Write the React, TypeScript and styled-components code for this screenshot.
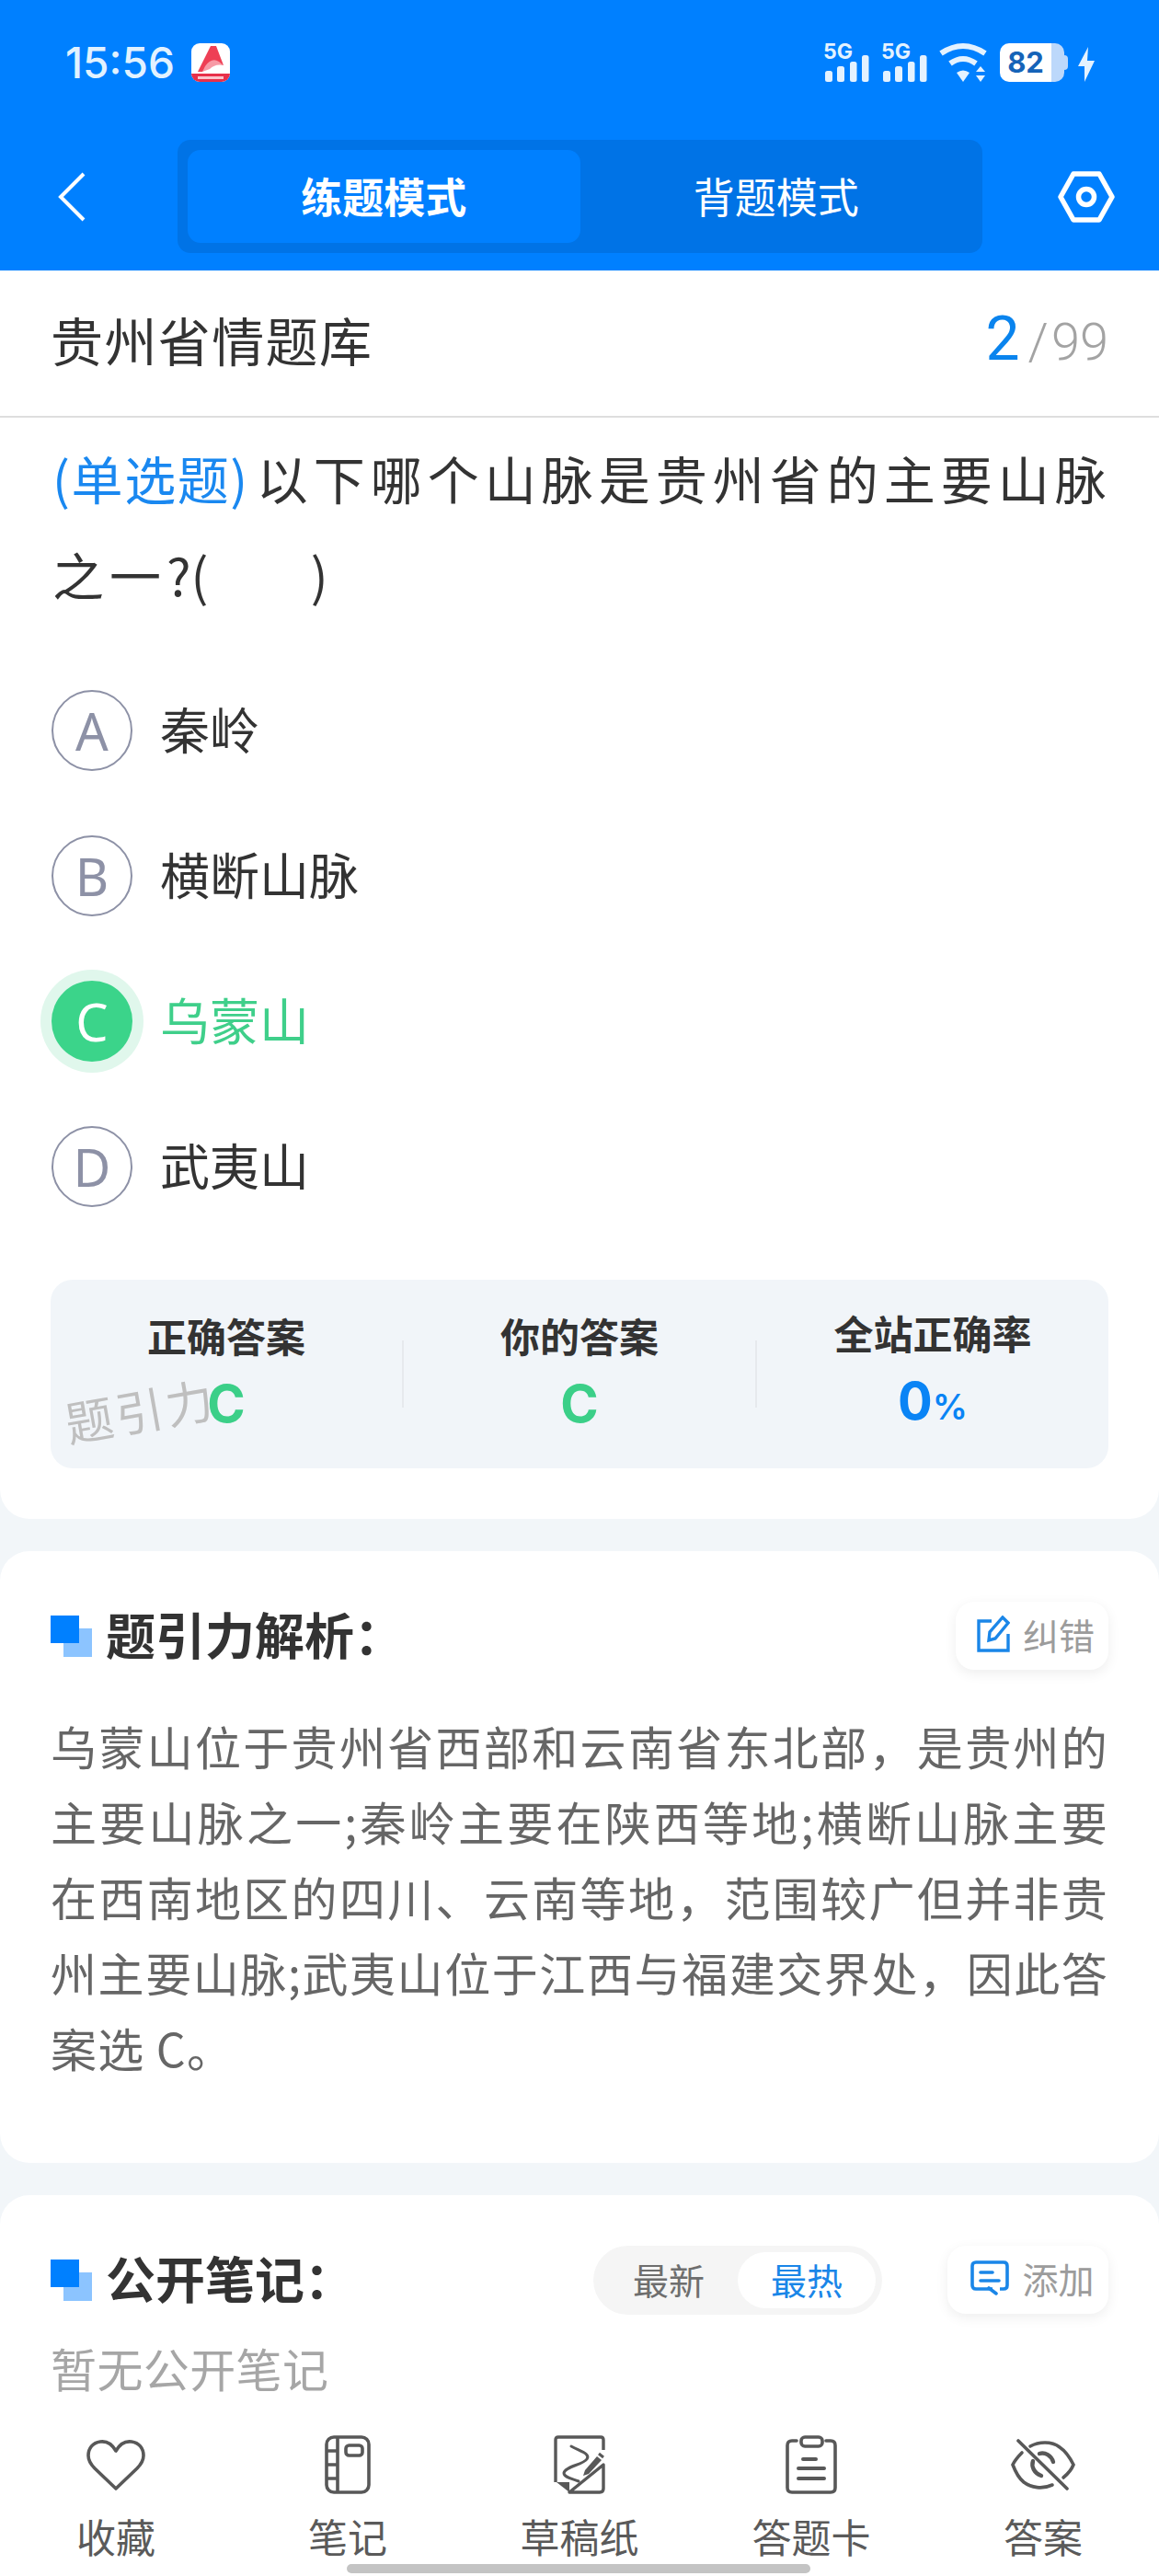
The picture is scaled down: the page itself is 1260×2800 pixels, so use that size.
import React from "react";
import styled, { createGlobalStyle } from "styled-components";

const CJK = `"Noto Sans CJK SC", "Noto Sans", sans-serif`;
const LATIN = `Inter, "Noto Sans CJK SC", sans-serif`;

const GlobalStyle = createGlobalStyle`
  html, body {
    margin: 0;
    padding: 0;
    background: #f2f6f9;
  }
  * {
    box-sizing: border-box;
  }
`;

const Screen = styled.div`
  position: relative;
  display: flex;
  flex-direction: column;
  width: 1260px;
  height: 2800px;
  overflow: hidden;
  background: #f2f6f9;
  font-family: ${CJK};
`;

const Header = styled.header`
  flex-shrink: 0;
  height: 294px;
  background: #0080ff;
`;

const StatusBar = styled.div`
  display: flex;
  align-items: flex-start;
  justify-content: space-between;
  height: 152px;
  padding: 46px 70px 0 71px;
`;

const StatusLeft = styled.div`
  display: flex;
  align-items: center;
  gap: 18px;
  height: 44px;
`;

const Time = styled.span`
  font-family: ${LATIN};
  font-size: 46px;
  font-weight: 500;
  line-height: 44px;
  color: #e2f2ff;
`;

const StatusRight = styled.div`
  display: flex;
  align-items: flex-start;
`;

const Battery = styled.div`
  position: relative;
  width: 70px;
  height: 42px;
  margin: 1px 15px 0 12px;
  padding-right: 14px;
  border-radius: 10px;
  background: linear-gradient(90deg, #ffffff 0 56px, #bcd8fb 56px);
  font-family: ${LATIN};
  font-size: 31px;
  font-weight: 700;
  line-height: 42px;
  text-align: center;
  color: #1563b8;

  &::after {
    content: "";
    position: absolute;
    top: 13px;
    right: -4px;
    width: 4px;
    height: 16px;
    border-radius: 0 4px 4px 0;
    background: #bcd8fb;
  }
`;

const NavRow = styled.div`
  display: flex;
  align-items: center;
  height: 123px;
`;

const BackSlot = styled.div`
  display: flex;
  justify-content: flex-start;
  width: 193px;
  padding-left: 62px;
`;

const ModeTabs = styled.div`
  display: flex;
  width: 875px;
  height: 123px;
  padding: 11px;
  border-radius: 14px;
  background: #0073e6;
`;

const ModeTab = styled.div<{ $active?: boolean }>`
  display: flex;
  align-items: center;
  justify-content: center;
  width: 427px;
  padding-bottom: 3px;
  border-radius: 14px;
  background: ${(p) => (p.$active ? "#0080ff" : "transparent")};
  font-size: 45px;
  font-weight: ${(p) => (p.$active ? 700 : 400)};
  color: #ffffff;
`;

const SettingSlot = styled.div`
  display: flex;
  justify-content: flex-end;
  flex: 1;
  padding-right: 48px;
`;

const Body = styled.main`
  flex: 1;
  min-height: 0;
  overflow: hidden;
`;

const QuestionCard = styled.section`
  padding-bottom: 55px;
  border-radius: 0 0 32px 32px;
  background: #ffffff;
`;

const TitleRow = styled.div`
  display: flex;
  align-items: center;
  justify-content: space-between;
  height: 160px;
  padding: 0 55px 10px;
  border-bottom: 2px solid #dedede;
`;

const BankTitle = styled.h1`
  margin: 0;
  font-size: 57px;
  font-weight: 400;
  letter-spacing: 1.4px;
  color: #333333;
`;

const Counter = styled.div`
  display: flex;
  align-items: baseline;
  font-family: Roboto, sans-serif;
  font-weight: 300;
  color: #a3a3a3;
`;

const CounterNow = styled.span`
  font-size: 66px;
  font-weight: 400;
  color: #0a84ee;
`;

const CounterSlash = styled.span`
  margin: 0 3px 0 9px;
  font-size: 56px;
`;

const CounterTotal = styled.span`
  font-size: 56px;
`;

const QuestionText = styled.p`
  margin: 0;
  padding: 12px 40px 0 57px;
  font-size: 56px;
  line-height: 105px;
  letter-spacing: 6px;
  color: #333333;
  white-space: pre-wrap;
`;

const QuestionType = styled.span`
  margin-right: 8px;
  letter-spacing: 1.6px;
  color: #1a88f0;
`;

const QuestionMark = styled.span`
  letter-spacing: 0;
`;

const Options = styled.ul`
  list-style: none;
  margin: 39px 0 44px;
  padding: 0 0 0 56px;
`;

const Option = styled.li`
  display: flex;
  align-items: center;
  gap: 30px;
  height: 158px;
`;

const OptionMark = styled.span<{ $correct?: boolean }>`
  display: flex;
  align-items: center;
  justify-content: center;
  width: 88px;
  height: 88px;
  border-radius: 50%;
  border: ${(p) => (p.$correct ? "none" : "2px solid #8d91a6")};
  background: ${(p) => (p.$correct ? "#3bd48a" : "#ffffff")};
  box-shadow: ${(p) => (p.$correct ? "0 0 0 12px #e0f7ec" : "none")};
  font-family: "Noto Sans", sans-serif;
  font-size: 56px;
  font-weight: 400;
  color: ${(p) => (p.$correct ? "#ffffff" : "#8d91a6")};
`;

const OptionText = styled.span<{ $correct?: boolean }>`
  padding-bottom: 6px;
  font-size: 54px;
  color: ${(p) => (p.$correct ? "#3fcf8a" : "#333333")};
`;

const StatsPanel = styled.div`
  position: relative;
  display: grid;
  grid-template-columns: 1fr 2px 1fr 2px 1fr;
  align-items: center;
  height: 205px;
  margin: 0 55px;
  border-radius: 24px;
  background: #f1f5f9;
`;

const StatColumn = styled.div`
  display: flex;
  flex-direction: column;
  align-items: center;
  padding-bottom: 10px;
`;

const StatLabel = styled.span`
  font-size: 43px;
  font-weight: 700;
  line-height: 62px;
  color: #333333;
`;

const StatValue = styled.span<{ $blue?: boolean }>`
  margin-top: 12px;
  font-family: ${LATIN};
  font-size: 56px;
  font-weight: 700;
  line-height: 64px;
  color: ${(p) => (p.$blue ? "#0a84f5" : "#3bcf88")};
`;

const StatUnit = styled.span`
  font-size: 38px;
  font-weight: 600;
`;

const StatDivider = styled.div`
  height: 73px;
  background: #e6e9ed;
`;

const Watermark = styled.span`
  position: absolute;
  left: 15px;
  top: 111px;
  font-size: 52px;
  font-weight: 400;
  letter-spacing: 3px;
  line-height: 60px;
  color: #bfbfbf;
  transform: rotate(-10deg);
`;

const Card = styled.section`
  margin-top: 35px;
  padding: 55px 55px 85px;
  border-radius: 32px;
  background: #ffffff;
`;

const CardHead = styled.div`
  display: flex;
  align-items: center;
  height: 74px;
`;

const HeadMark = styled.span`
  position: relative;
  flex-shrink: 0;
  width: 45px;
  height: 45px;
  margin: 0 15px 0 0;
  background: linear-gradient(#8cc4ff, #8cc4ff) no-repeat right bottom / 31px 31px;

  &::before {
    content: "";
    position: absolute;
    left: 0;
    top: 0;
    width: 31px;
    height: 30px;
    background: #0080ff;
  }
`;

const CardTitle = styled.h2`
  flex: 1;
  margin: 0;
  padding-bottom: 6px;
  font-size: 54px;
  font-weight: 700;
  color: #333333;
`;

const ActionButton = styled.div<{ $gap: number; $width: number; $shift: number }>`
  display: flex;
  align-items: center;
  justify-content: center;
  gap: ${(p) => p.$gap}px;
  width: ${(p) => p.$width}px;
  height: 74px;
  padding: 0 0 5px ${(p) => p.$shift}px;
  border-radius: 20px;
  background: #ffffff;
  box-shadow: 0 4px 14px rgba(0, 0, 0, 0.07);
  font-size: 39px;
  color: #9c9c9c;
`;

const Explanation = styled.p`
  margin: 41px 0 0;
  font-size: 50px;
  line-height: 82px;
  letter-spacing: 1.2px;
  text-align: justify;
  color: #666666;
`;

const SortSwitch = styled.div`
  display: flex;
  align-items: center;
  width: 314px;
  height: 75px;
  margin-right: 71px;
  padding: 0 7px 0 7px;
  border-radius: 38px;
  background: #f5f5f5;
`;

const SortItem = styled.span<{ $active?: boolean }>`
  display: flex;
  align-items: center;
  justify-content: center;
  flex: ${(p) => (p.$active ? "0 0 150px" : "1")};
  height: 61px;
  padding-bottom: 3px;
  border-radius: 31px;
  background: ${(p) => (p.$active ? "#ffffff" : "transparent")};
  font-size: 39px;
  color: ${(p) => (p.$active ? "#1a86e8" : "#6e6e6e")};
`;

const EmptyNote = styled.div`
  margin-top: 23px;
  font-size: 50px;
  line-height: 70px;
  letter-spacing: 0.4px;
  color: #a6a6a6;
`;

const TabBar = styled.nav`
  flex-shrink: 0;
  display: grid;
  grid-template-columns: repeat(5, 1fr);
  height: 180px;
  padding-top: 27px;
  background: #ffffff;
`;

const TabItem = styled.div`
  display: flex;
  flex-direction: column;
  align-items: center;
`;

const TabIcon = styled.div`
  display: flex;
  align-items: center;
  justify-content: center;
  height: 64px;
`;

const TabLabel = styled.span`
  margin-top: 20px;
  font-size: 43px;
  line-height: 50px;
  color: #5a5a5a;
`;

const HomeIndicator = styled.div`
  position: absolute;
  left: 377px;
  bottom: 3px;
  width: 504px;
  height: 10px;
  border-radius: 5px;
  background: #c4c4c4;
`;

const SignalGap = styled.span`
  width: 13px;
`;

const Signal = () => (
  <svg width="50" height="50" viewBox="0 -6 50 50" style={{ marginTop: -6 }}>
    <text x="0" y="18" fontFamily="Inter, sans-serif" fontSize="23" fontWeight="700" fill="#e4f2ff">5G</text>
    <g fill="#e4f2ff">
      <rect x="2" y="31" width="8" height="12" rx="2.5" />
      <rect x="15" y="26" width="8" height="17" rx="2.5" />
      <rect x="29" y="21" width="7.5" height="22" rx="2.5" />
      <rect x="42" y="14" width="7.5" height="29" rx="2.5" />
    </g>
  </svg>
);

const Wifi = () => (
  <svg width="54" height="44" viewBox="0 0 54 44" style={{ marginLeft: 13 }}>
    <g fill="none" stroke="#e4f2ff" strokeWidth="6">
      <path d="M2 12 Q26 -4 50 12" />
      <path d="M12 23 Q26 13 40 23" />
    </g>
    <g fill="#e4f2ff">
      <path d="M19 33 Q26 28 33 33 L26 43Z" />
      <path d="M40 32 L45 26 L50 32Z" />
      <path d="M40 36 L50 36 L45 43Z" />
    </g>
  </svg>
);

const Bolt = () => (
  <svg width="18" height="38" viewBox="0 0 18 38" style={{ marginTop: 5 }}>
    <path d="M11 0 L0 21 L7 21 L7 38 L18 15 L10 15Z" fill="#e4f2ff" />
  </svg>
);

const AppLogo = () => (
  <svg width="42" height="42" viewBox="0 0 42 42">
    <rect width="42" height="42" rx="9" fill="#ffffff" />
    <path d="M0 33 H42 V33 A9 9 0 0 1 33 42 H9 A9 9 0 0 1 0 33Z" fill="#e8304a" />
    <path d="M21 3 L27 3 L35 24 L29 22 Q24 20 19 24 L12 31 L7 31Z" fill="#ee3f55" />
    <path d="M15 25 Q22 15 30 20 L35 24 Q26 22 20 28 L12 31Z" fill="#f79aa6" />
    <rect x="7" y="36" width="28" height="3" fill="#fbc4cc" />
  </svg>
);

const BackIcon = () => (
  <svg width="32" height="54" viewBox="0 0 32 54">
    <path d="M29 2 L4 27 L29 52" fill="none" stroke="#ffffff" strokeWidth="4" />
  </svg>
);

const SettingIcon = () => (
  <svg width="62" height="56" viewBox="0 0 62 56">
    <path d="M17 3 H45 L59 28 L45 53 H17 L3 28Z" fill="none" stroke="#ffffff" strokeWidth="5.5" strokeLinejoin="round" />
    <circle cx="31" cy="28" r="8.5" fill="none" stroke="#ffffff" strokeWidth="5.5" />
  </svg>
);

const EditIcon = () => (
  <svg width="36" height="40" viewBox="0 0 36 40">
    <g fill="none" stroke="#1a86e8" strokeWidth="3.4">
      <path d="M16 6 H2 V38 H34 V20" />
      <path d="M13 27 L14 18 L28 2 L34 8 L20 25Z" />
    </g>
  </svg>
);

const CommentIcon = () => (
  <svg width="42" height="38" viewBox="0 0 42 38">
    <path d="M24 31 H6 Q2 31 2 27 V6 Q2 2 6 2 H36 Q40 2 40 6 V27 Q40 31 36 31 H32" fill="none" stroke="#1a86e8" strokeWidth="3.6" />
    <path d="M20 30 L28 36" fill="none" stroke="#1a86e8" strokeWidth="3.6" strokeLinecap="round" />
    <path d="M11 13 H24 M11 22 H31" fill="none" stroke="#1a86e8" strokeWidth="3.6" strokeLinecap="round" />
  </svg>
);

const HeartIcon = () => (
  <svg width="64" height="56" viewBox="0 0 64 56">
    <path d="M32 13 C28 6 22 2 15 3 C7 4 2 10 2 18 C2 24 5 28 9 32 L32 54 L55 32 C59 28 62 24 62 18 C62 10 57 4 49 3 C42 2 36 6 32 13Z" fill="none" stroke="#585858" strokeWidth="3.6" strokeLinejoin="round" />
  </svg>
);

const NotebookIcon = () => (
  <svg width="50" height="64" viewBox="0 0 50 64">
    <g fill="none" stroke="#585858" strokeWidth="3.6">
      <rect x="2" y="2" width="46" height="60" rx="8" />
      <path d="M14 2 V62 M2 17 H14 M2 32 H14 M2 47 H14" />
      <rect x="23" y="11" width="18" height="11" rx="3.5" />
    </g>
  </svg>
);

const DraftIcon = () => (
  <svg width="56" height="64" viewBox="0 0 56 64">
    <path d="M2 51 V5 Q2 2 5 2 H51 Q54 2 54 5 V16 M54 32 V58 Q54 62 50 62 H17 Z" fill="none" stroke="#585858" strokeWidth="3.4" strokeLinejoin="round" />
    <path d="M3 51 H17 V62Z" fill="#585858" />
    <path d="M19 12 C30 18 40 20 36 26 C32 32 12 34 11 41 C11 46 20 47 27 50" fill="none" stroke="#585858" strokeWidth="3" strokeLinecap="round" />
    <path d="M47 23 L52 27 L38 42 L32 44 L34 38Z" fill="#585858" />
    <path d="M49 20 L54 24" stroke="#585858" strokeWidth="3" />
  </svg>
);

const ClipboardIcon = () => (
  <svg width="56" height="64" viewBox="0 0 56 64">
    <g fill="none" stroke="#585858" strokeWidth="3.6" strokeLinecap="round">
      <path d="M12 6 H7 Q2 6 2 11 V57 Q2 62 7 62 H49 Q54 62 54 57 V11 Q54 6 49 6 H44" />
      <rect x="17" y="2" width="23" height="10" rx="4" />
      <path d="M19 26 H33 M14 36 H42 M14 47 H42" strokeWidth="4" />
    </g>
  </svg>
);

const EyeOffIcon = () => (
  <svg width="70" height="56" viewBox="0 0 70 56">
    <g fill="none" stroke="#585858" strokeWidth="3.6" strokeLinecap="round">
      <path d="M8 2 L61 54" />
      <path d="M21 8 C30 3 44 2 53 9 C59 13 64 20 68 28 C66 33 62 38 57 42" />
      <path d="M45 50 C34 55 22 53 14 47 C9 43 5 36 2 28 C4 24 8 19 12 15" />
      <path d="M31 16 C37 14 44 18 46 25 M24 24 C22 30 25 37 33 40" strokeWidth="4.4" />
    </g>
  </svg>
);

const options = [
  { mark: "A", text: "秦岭" },
  { mark: "B", text: "横断山脉" },
  { mark: "C", text: "乌蒙山", correct: true },
  { mark: "D", text: "武夷山" },
];

const tabs = [
  { label: "收藏", icon: <HeartIcon /> },
  { label: "笔记", icon: <NotebookIcon /> },
  { label: "草稿纸", icon: <DraftIcon /> },
  { label: "答题卡", icon: <ClipboardIcon /> },
  { label: "答案", icon: <EyeOffIcon /> },
];

export default function App() {
  return (
    <>
      <GlobalStyle />
      <Screen>
        <Header>
          <StatusBar>
            <StatusLeft>
              <Time>15:56</Time>
              <AppLogo />
            </StatusLeft>
            <StatusRight>
              <Signal />
              <SignalGap />
              <Signal />
              <Wifi />
              <Battery>82</Battery>
              <Bolt />
            </StatusRight>
          </StatusBar>
          <NavRow>
            <BackSlot>
              <BackIcon />
            </BackSlot>
            <ModeTabs>
              <ModeTab $active>练题模式</ModeTab>
              <ModeTab>背题模式</ModeTab>
            </ModeTabs>
            <SettingSlot>
              <SettingIcon />
            </SettingSlot>
          </NavRow>
        </Header>

        <Body>
          <QuestionCard>
            <TitleRow>
              <BankTitle>贵州省情题库</BankTitle>
              <Counter>
                <CounterNow>2</CounterNow>
                <CounterSlash>/</CounterSlash>
                <CounterTotal>99</CounterTotal>
              </Counter>
            </TitleRow>
            <QuestionText>
              <QuestionType>(单选题)</QuestionType>
              以下哪个山脉是贵州省的主要山脉之一<QuestionMark>?(</QuestionMark>{"      "})
            </QuestionText>
            <Options>
              {options.map((item) => (
                <Option key={item.mark}>
                  <OptionMark $correct={item.correct}>{item.mark}</OptionMark>
                  <OptionText $correct={item.correct}>{item.text}</OptionText>
                </Option>
              ))}
            </Options>
            <StatsPanel>
              <StatColumn>
                <StatLabel>正确答案</StatLabel>
                <StatValue>C</StatValue>
              </StatColumn>
              <StatDivider />
              <StatColumn>
                <StatLabel>你的答案</StatLabel>
                <StatValue>C</StatValue>
              </StatColumn>
              <StatDivider />
              <StatColumn>
                <StatLabel>全站正确率</StatLabel>
                <StatValue $blue>
                  0<StatUnit>%</StatUnit>
                </StatValue>
              </StatColumn>
              <Watermark>题引力</Watermark>
            </StatsPanel>
          </QuestionCard>

          <Card>
            <CardHead>
              <HeadMark />
              <CardTitle>题引力解析：</CardTitle>
              <ActionButton $gap={14} $width={166} $shift={8}>
                <EditIcon />
                纠错
              </ActionButton>
            </CardHead>
            <Explanation>
              乌蒙山位于贵州省西部和云南省东北部，是贵州的主要山脉之一;秦岭主要在陕西等地;横断山脉主要在西南地区的四川、云南等地，范围较广但并非贵州主要山脉;武夷山位于江西与福建交界处，因此答案选 C。
            </Explanation>
          </Card>

          <Card>
            <CardHead>
              <HeadMark />
              <CardTitle>公开笔记：</CardTitle>
              <SortSwitch>
                <SortItem>最新</SortItem>
                <SortItem $active>最热</SortItem>
              </SortSwitch>
              <ActionButton $gap={14} $width={175} $shift={10}>
                <CommentIcon />
                添加
              </ActionButton>
            </CardHead>
            <EmptyNote>暂无公开笔记</EmptyNote>
          </Card>
        </Body>

        <TabBar>
          {tabs.map((tab) => (
            <TabItem key={tab.label}>
              <TabIcon>{tab.icon}</TabIcon>
              <TabLabel>{tab.label}</TabLabel>
            </TabItem>
          ))}
        </TabBar>
        <HomeIndicator />
      </Screen>
    </>
  );
}
